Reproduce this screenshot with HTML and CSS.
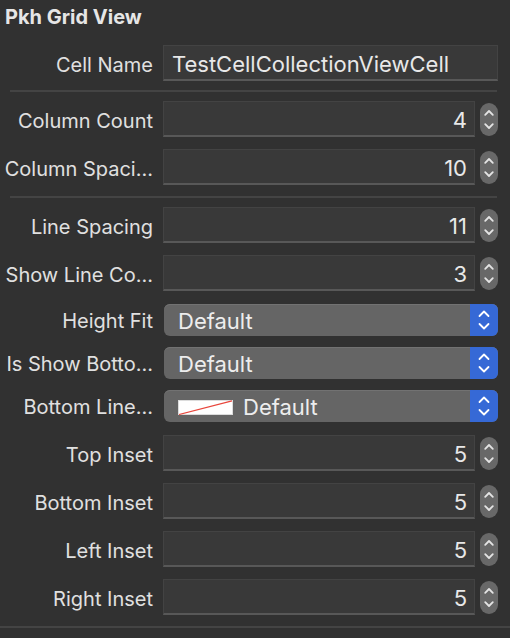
FILE: index.html
```html
<!DOCTYPE html>
<html>
<head>
<meta charset="utf-8">
<link rel="stylesheet" href="styles.css">
</head>
<body>
<div class="panel">
  <div class="header">Pkh Grid View</div>

  <div class="section s1">
    <div class="row">
      <div class="label">Cell Name</div>
      <div class="field text">TestCellCollectionViewCell</div>
    </div>
  </div>
  <div class="sep"></div>

  <div class="section s2">
    <div class="row">
      <div class="label">Column Count</div>
      <div class="field num">4</div>
      <div class="stepper"><svg viewBox="0 0 18 33" width="18" height="33"><path d="M5.2 11.8 L9 8 L12.8 11.8 M5.2 21.2 L9 25 L12.8 21.2" fill="none" stroke="#e4e4e4" stroke-width="1.8" stroke-linecap="round" stroke-linejoin="round"/></svg></div>
    </div>
    <div class="row">
      <div class="label">Column Spaci...</div>
      <div class="field num">10</div>
      <div class="stepper"><svg viewBox="0 0 18 33" width="18" height="33"><path d="M5.2 11.8 L9 8 L12.8 11.8 M5.2 21.2 L9 25 L12.8 21.2" fill="none" stroke="#e4e4e4" stroke-width="1.8" stroke-linecap="round" stroke-linejoin="round"/></svg></div>
    </div>
  </div>
  <div class="sep"></div>

  <div class="section s3">
    <div class="row">
      <div class="label">Line Spacing</div>
      <div class="field num">11</div>
      <div class="stepper"><svg viewBox="0 0 18 33" width="18" height="33"><path d="M5.2 11.8 L9 8 L12.8 11.8 M5.2 21.2 L9 25 L12.8 21.2" fill="none" stroke="#e4e4e4" stroke-width="1.8" stroke-linecap="round" stroke-linejoin="round"/></svg></div>
    </div>
    <div class="row">
      <div class="label">Show Line Co...</div>
      <div class="field num">3</div>
      <div class="stepper"><svg viewBox="0 0 18 33" width="18" height="33"><path d="M5.2 11.8 L9 8 L12.8 11.8 M5.2 21.2 L9 25 L12.8 21.2" fill="none" stroke="#e4e4e4" stroke-width="1.8" stroke-linecap="round" stroke-linejoin="round"/></svg></div>
    </div>
    <div class="row pop">
      <div class="label">Height Fit</div>
      <div class="popup">
        <div class="popup-value">Default</div>
        <div class="popup-arrows"><svg viewBox="0 0 28 32" width="28" height="32"><path d="M9.5 12 L14 7.5 L18.5 12 M9.5 20 L14 24.5 L18.5 20" fill="none" stroke="#fff" stroke-width="1.8" stroke-linecap="round" stroke-linejoin="round"/></svg></div>
      </div>
    </div>
    <div class="row pop">
      <div class="label">Is Show Botto...</div>
      <div class="popup">
        <div class="popup-value">Default</div>
        <div class="popup-arrows"><svg viewBox="0 0 28 32" width="28" height="32"><path d="M9.5 12 L14 7.5 L18.5 12 M9.5 20 L14 24.5 L18.5 20" fill="none" stroke="#fff" stroke-width="1.8" stroke-linecap="round" stroke-linejoin="round"/></svg></div>
      </div>
    </div>
    <div class="row pop">
      <div class="label">Bottom Line...</div>
      <div class="popup">
        <div class="popup-value">
          <span class="swatch"><svg viewBox="0 0 55 15" width="55" height="15" preserveAspectRatio="none"><rect x="0.5" y="0.5" width="54" height="14" fill="#fff" stroke="#dcdcdc"/><line x1="1" y1="14.5" x2="54" y2="0.8" stroke="#e8463c" stroke-width="1.2"/></svg></span>Default
        </div>
        <div class="popup-arrows"><svg viewBox="0 0 28 32" width="28" height="32"><path d="M9.5 12 L14 7.5 L18.5 12 M9.5 20 L14 24.5 L18.5 20" fill="none" stroke="#fff" stroke-width="1.8" stroke-linecap="round" stroke-linejoin="round"/></svg></div>
      </div>
    </div>
    <div class="row">
      <div class="label">Top Inset</div>
      <div class="field num">5</div>
      <div class="stepper"><svg viewBox="0 0 18 33" width="18" height="33"><path d="M5.2 11.8 L9 8 L12.8 11.8 M5.2 21.2 L9 25 L12.8 21.2" fill="none" stroke="#e4e4e4" stroke-width="1.8" stroke-linecap="round" stroke-linejoin="round"/></svg></div>
    </div>
    <div class="row">
      <div class="label">Bottom Inset</div>
      <div class="field num">5</div>
      <div class="stepper"><svg viewBox="0 0 18 33" width="18" height="33"><path d="M5.2 11.8 L9 8 L12.8 11.8 M5.2 21.2 L9 25 L12.8 21.2" fill="none" stroke="#e4e4e4" stroke-width="1.8" stroke-linecap="round" stroke-linejoin="round"/></svg></div>
    </div>
    <div class="row">
      <div class="label">Left Inset</div>
      <div class="field num">5</div>
      <div class="stepper"><svg viewBox="0 0 18 33" width="18" height="33"><path d="M5.2 11.8 L9 8 L12.8 11.8 M5.2 21.2 L9 25 L12.8 21.2" fill="none" stroke="#e4e4e4" stroke-width="1.8" stroke-linecap="round" stroke-linejoin="round"/></svg></div>
    </div>
    <div class="row">
      <div class="label">Right Inset</div>
      <div class="field num">5</div>
      <div class="stepper"><svg viewBox="0 0 18 33" width="18" height="33"><path d="M5.2 11.8 L9 8 L12.8 11.8 M5.2 21.2 L9 25 L12.8 21.2" fill="none" stroke="#e4e4e4" stroke-width="1.8" stroke-linecap="round" stroke-linejoin="round"/></svg></div>
    </div>
  </div>
  <div class="sep full"></div>
</div>
</body>
</html>
```

FILE: styles.css
```css
html, body {
  margin: 0;
  padding: 0;
  background: #313131;
}

body {
  width: 510px;
  height: 638px;
  overflow: hidden;
  font-family: "Inter", "Liberation Sans", sans-serif;
  color: #e3e3e3;
}

.panel {
  display: flex;
  flex-direction: column;
}

.header {
  height: 34px;
  padding-left: 5px;
  font-size: 20px;
  font-weight: 700;
  line-height: 34px;
  color: #e6e6e6;
}

.section {
  display: flex;
  flex-direction: column;
  padding-right: 12px;
}

.s1 { padding-top: 11px; padding-bottom: 9px; }
.s2 { padding-top: 9px; padding-bottom: 11px; }
.s3 { padding-top: 9px; padding-bottom: 11px; }

.sep {
  height: 2px;
  margin: 0 13px 0 10px;
  background: #444444;
}

.sep.full {
  margin: 0;
}

.row {
  display: flex;
  align-items: center;
  height: 36px;
}

.row + .row { margin-top: 12px; }
.row.pop { height: 32px; margin-top: 13px; }
.row.pop + .row.pop { margin-top: 11px; }
.row.pop + .row:not(.pop) { margin-top: 13px; }

.label {
  width: 153px;
  flex: none;
  padding-top: 4px;
  text-align: right;
  font-size: 20px;
  white-space: nowrap;
  color: #e0e0e0;
}

.row.pop .label {
  padding-top: 2px;
}

.field {
  box-sizing: border-box;
  height: 36px;
  margin-left: 10px;
  background: #393939;
  border: 1px solid #434343;
  border-bottom: 2px solid #585858;
  font-size: 22px;
  line-height: 37px;
  color: #e8e8e8;
}

.field.text {
  flex: 1;
  padding-left: 8px;
}

.field.num {
  width: 312px;
  flex: none;
  text-align: right;
  padding-right: 7px;
}

.stepper {
  width: 18px;
  height: 33px;
  margin-left: 5px;
  border-radius: 9px;
  background: #686868;
  flex: none;
}

.stepper svg { display: block; }

.popup {
  flex: 1;
  height: 32px;
  margin-left: 11px;
  display: flex;
  border-radius: 6px;
  overflow: hidden;
  background: #656565;
  box-shadow: inset 0 1px 0 #727272;
}

.popup-value {
  flex: 1;
  display: flex;
  align-items: center;
  padding-left: 14px;
  padding-top: 2px;
  font-size: 22px;
  color: #ededed;
}

.swatch {
  display: inline-flex;
  margin-right: 10px;
}

.swatch svg { display: block; }

.popup-arrows {
  width: 28px;
  flex: none;
  background: #3669d6;
}

.popup-arrows svg { display: block; }
```
